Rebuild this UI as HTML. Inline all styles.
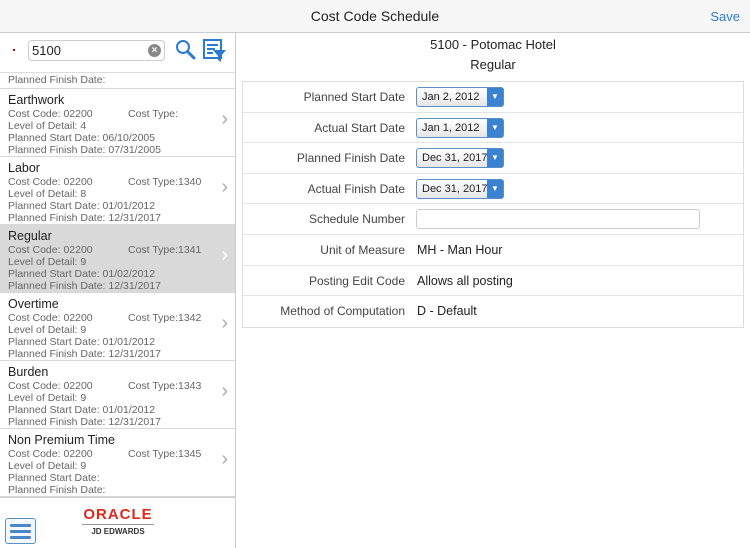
<!DOCTYPE html>
<html><head><style>
*{margin:0;padding:0;box-sizing:border-box}
body{width:750px;height:548px;overflow:hidden;background:#fff;font-family:"Liberation Sans",sans-serif;color:#222;position:relative}
.hdr{position:absolute;left:0;top:0;width:750px;height:33px;background:#f7f7f7;border-bottom:1px solid #ccc;text-align:center;font-size:14px;line-height:33px;color:#222}
.save{position:absolute;right:10px;top:0;color:#2a7bd4;font-size:13px}
.left{position:absolute;left:0;top:33px;width:236px;height:515px;border-right:1px solid #ccc}
.search{height:40px;border-bottom:1px solid #ddd;position:relative}
.dot{position:absolute;left:13px;top:16px;width:2px;height:2px;background:#d00}
.inp{position:absolute;left:28px;top:7px;width:137px;height:21px;border:1px solid #ccc;border-radius:4px;font-size:13px;line-height:19px;padding-left:3px}
.clr{position:absolute;right:3px;top:3px;width:13px;height:13px;border-radius:50%;background:#888;color:#fff;font-size:10px;line-height:13px;text-align:center;font-weight:bold}
.item{position:relative;height:68px;border-bottom:1px solid #d8d8d8;padding:4px 0 0 8px;font-size:10.5px;line-height:12px;color:#666}
.item b{display:block;font-weight:normal;font-size:12.5px;line-height:14px;color:#222;margin-bottom:1px}
.item .ct{position:absolute;left:128px;top:19px}
.item .ch{position:absolute;right:7px;top:20px;color:#aaa;font-size:20px;line-height:20px}
.sel{background:#d9d9d9}
.foot{position:absolute;left:0;top:464px;width:235px;height:51px;border-top:1px solid #ccc}
.menu{position:absolute;left:5px;top:20px;width:31px;height:26px;border:1px solid #5b8fc9;border-radius:3px;background:#f4f8fc}
.menu i{position:absolute;left:4px;width:21px;height:3px;background:#4a86c8;border-radius:1px}
.right{position:absolute;left:236px;top:33px;width:514px}
.t{text-align:center;font-size:13px;color:#222}
.form{position:absolute;left:6px;top:48px;width:502px;border:1px solid #ddd}
.row{height:30.6px;border-bottom:1px solid #e3e3e3;position:relative;font-size:12px;line-height:30px}
.row:last-child{border-bottom:none}
.lab{position:absolute;right:338px;color:#444;text-align:right;white-space:nowrap}
.val{position:absolute;left:174px;color:#222;font-size:12.5px}
.dd{position:absolute;left:173px;top:5px;width:88px;height:20px;border:1px solid #5b8fc9;border-radius:3px;background:linear-gradient(#fff,#e6e6e6);font-size:11px;line-height:18px;padding-left:5px}
.dd span{position:absolute;right:0;top:0;width:16px;height:18px;background:#3b82d0;color:#fff;font-size:8px;text-align:center;line-height:18px}
.tb{position:absolute;left:173px;top:5px;width:284px;height:20px;border:1px solid #ccc;border-radius:3px}
</style></head><body>
<div class="hdr">Cost Code Schedule<span class="save">Save</span></div>
<div class="left">
<div class="search"><div class="dot"></div><div class="inp">5100<div class="clr">×</div></div>
<svg style="position:absolute;left:175px;top:6px" width="22" height="22" viewBox="0 0 22 22"><circle cx="8" cy="8" r="6" fill="none" stroke="#2a7bd4" stroke-width="2"/><line x1="12.5" y1="12.5" x2="19" y2="19" stroke="#2a7bd4" stroke-width="3" stroke-linecap="round"/></svg>
<svg style="position:absolute;left:203px;top:6px" width="24" height="24" viewBox="0 0 24 24"><rect x="1" y="1" width="17" height="18" fill="#fff" stroke="#2a7bd4" stroke-width="2"/><line x1="4" y1="6" x2="15" y2="6" stroke="#2a7bd4" stroke-width="2"/><line x1="4" y1="10" x2="12" y2="10" stroke="#2a7bd4" stroke-width="2"/><line x1="4" y1="14" x2="10" y2="14" stroke="#2a7bd4" stroke-width="2"/><path d="M10 11h13l-5 6v6l-3-2v-4z" fill="#2a7bd4"/></svg>
</div>
<div class="item" style="height:16px;padding-top:1px">Planned Finish Date:</div>
<div class="item"><b>Earthwork</b>Cost Code: 02200<br>Level of Detail: 4<br>Planned Start Date: 06/10/2005<br>Planned Finish Date: 07/31/2005<span class="ct">Cost Type:</span><span class="ch">›</span></div>
<div class="item"><b>Labor</b>Cost Code: 02200<br>Level of Detail: 8<br>Planned Start Date: 01/01/2012<br>Planned Finish Date: 12/31/2017<span class="ct">Cost Type:1340</span><span class="ch">›</span></div>
<div class="item sel"><b>Regular</b>Cost Code: 02200<br>Level of Detail: 9<br>Planned Start Date: 01/02/2012<br>Planned Finish Date: 12/31/2017<span class="ct">Cost Type:1341</span><span class="ch" style="color:#fff">›</span></div>
<div class="item"><b>Overtime</b>Cost Code: 02200<br>Level of Detail: 9<br>Planned Start Date: 01/01/2012<br>Planned Finish Date: 12/31/2017<span class="ct">Cost Type:1342</span><span class="ch">›</span></div>
<div class="item"><b>Burden</b>Cost Code: 02200<br>Level of Detail: 9<br>Planned Start Date: 01/01/2012<br>Planned Finish Date: 12/31/2017<span class="ct">Cost Type:1343</span><span class="ch">›</span></div>
<div class="item"><b>Non Premium Time</b>Cost Code: 02200<br>Level of Detail: 9<br>Planned Start Date:<br>Planned Finish Date:<span class="ct">Cost Type:1345</span><span class="ch">›</span></div>
<div class="foot">
<div class="menu"><i style="top:5px"></i><i style="top:11px"></i><i style="top:17px"></i></div>
<div style="position:absolute;left:80px;top:9px;width:76px;text-align:center;color:#e0281d;font-size:15px;font-weight:bold;letter-spacing:1px;line-height:15px">ORACLE</div>
<div style="position:absolute;left:82px;top:26px;width:72px;height:1px;background:#999"></div>
<div style="position:absolute;left:80px;top:29px;width:76px;text-align:center;font-size:8px;font-weight:bold;color:#333">JD EDWARDS</div>
</div>
</div>
<div class="right">
<div class="t" style="margin-top:5px;line-height:14px">5100 - Potomac Hotel</div>
<div class="t" style="margin-top:6px;line-height:14px">Regular</div>
<div class="form">
<div class="row"><span class="lab">Planned Start Date</span><div class="dd">Jan 2, 2012<span>▼</span></div></div>
<div class="row"><span class="lab">Actual Start Date</span><div class="dd">Jan 1, 2012<span>▼</span></div></div>
<div class="row"><span class="lab">Planned Finish Date</span><div class="dd">Dec 31, 2017<span>▼</span></div></div>
<div class="row"><span class="lab">Actual Finish Date</span><div class="dd">Dec 31, 2017<span>▼</span></div></div>
<div class="row"><span class="lab">Schedule Number</span><div class="tb"></div></div>
<div class="row"><span class="lab">Unit of Measure</span><span class="val">MH - Man Hour</span></div>
<div class="row"><span class="lab">Posting Edit Code</span><span class="val">Allows all posting</span></div>
<div class="row"><span class="lab">Method of Computation</span><span class="val">D - Default</span></div>
</div>
</div>
</body></html>
